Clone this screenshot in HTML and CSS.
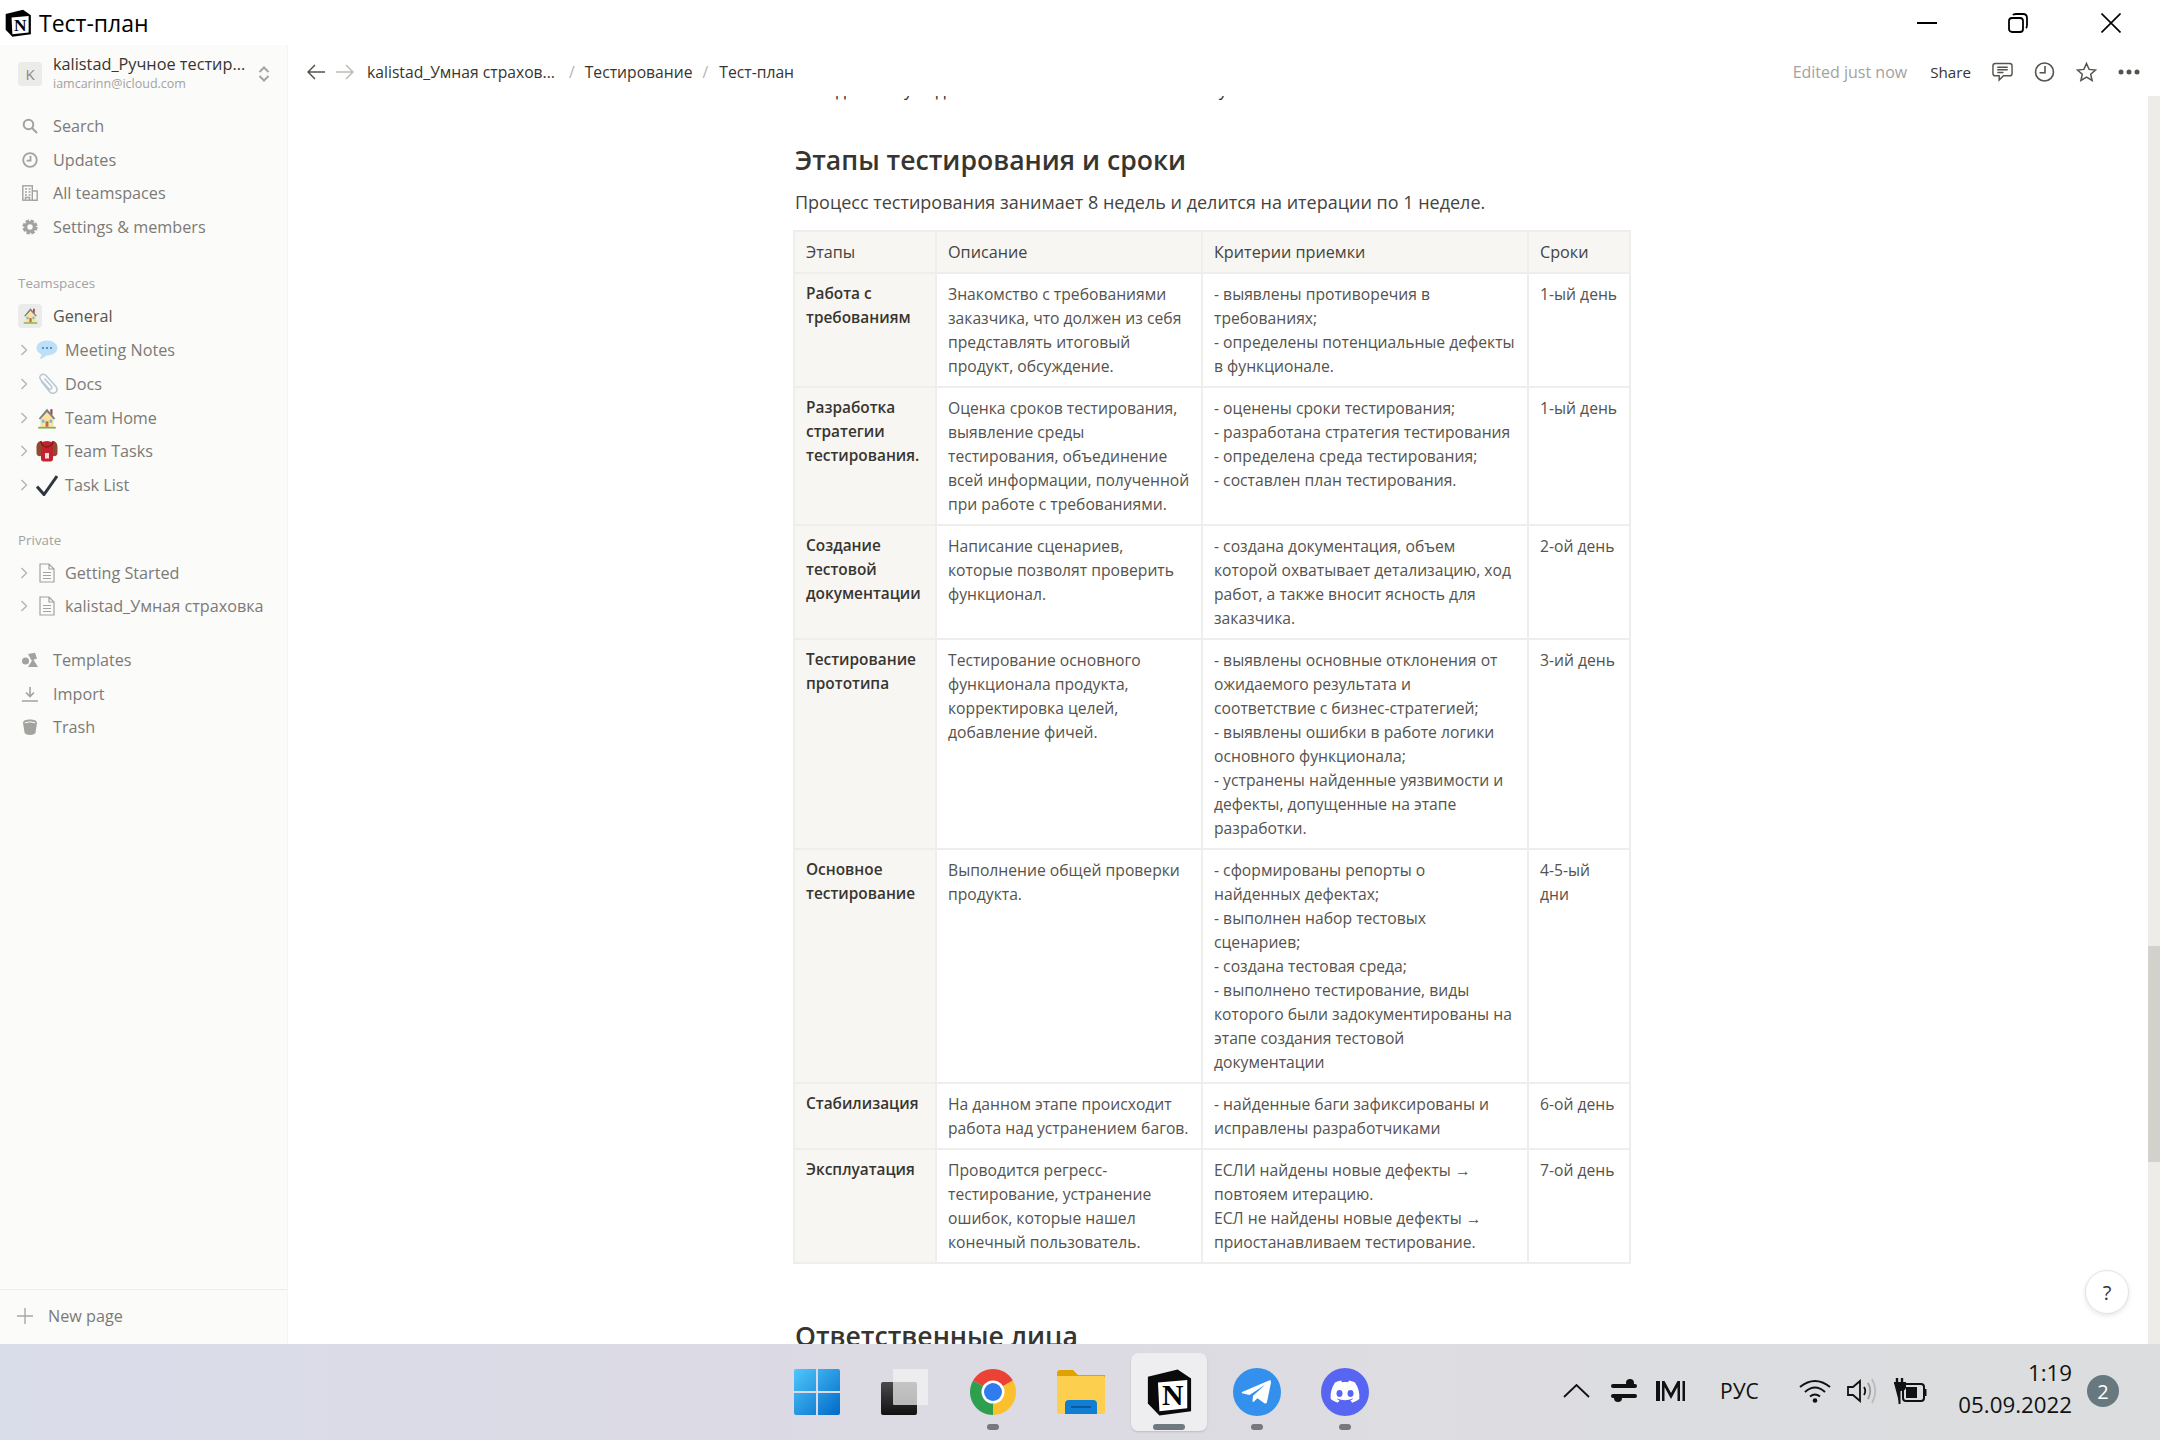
FILE: index.html
```html
<!DOCTYPE html>
<html lang="ru">
<head>
<meta charset="utf-8">
<title>Тест-план</title>
<link rel="stylesheet" href="styles.css">
</head>
<body>
<header class="titlebar">
  <svg class="title-logo" viewBox="0 0 100 100"><path d="M6 18 L68 3 L96 22 L96 90 L30 99 L6 74 Z" fill="#000"/><path d="M27 30 L88 25 L88 84 L30 90 Z" fill="#fff"/><text x="58" y="78" text-anchor="middle" font-family="Liberation Serif" font-weight="700" font-size="62" fill="#000">N</text></svg>
  <span class="title-text">Тест-план</span>
  <div class="win-controls">
    <svg class="win-min" viewBox="0 0 20 20"><path d="M0 10H20" stroke="#000" stroke-width="2"/></svg>
    <svg class="win-restore" viewBox="0 0 20 20" fill="none" stroke="#000" stroke-width="1.8"><rect x="1" y="5" width="14" height="14" rx="3"/><path d="M5 2.2 Q5.5 1 8 1H15Q19 1 19 5V12Q19 14.5 17.8 15"/></svg>
    <svg class="win-close" viewBox="0 0 20 20"><path d="M0.5 .5L19.5 19.5M19.5 .5L.5 19.5" stroke="#000" stroke-width="1.6"/></svg>
  </div>
</header>

<div class="app">
  <aside class="sidebar">
    <div class="account">
      <span class="tile tile-k">K</span>
      <div class="account-text">
        <div class="account-name">kalistad_Ручное тестир...</div>
        <div class="account-mail">iamcarinn@icloud.com</div>
      </div>
      <svg class="updown" viewBox="0 0 12 16" fill="none" stroke="#a5a4a0" stroke-width="2"><path d="M1.5 6L6 1.5L10.5 6M1.5 10L6 14.5L10.5 10"/></svg>
    </div>

    <nav class="group">
      <div class="row"><svg class="nav-ic" viewBox="0 0 16 16" fill="none" stroke="#a3a29e" stroke-width="2"><circle cx="6.5" cy="6.5" r="4.8"/><path d="M10 10L15 15"/></svg><span>Search</span></div>
      <div class="row"><svg class="nav-ic" viewBox="0 0 16 16" fill="none" stroke="#a3a29e" stroke-width="1.8"><circle cx="8" cy="8" r="6.8"/><path d="M8.5 3.8V8.6H4.6"/></svg><span>Updates</span></div>
      <div class="row"><svg class="nav-ic" viewBox="0 0 16 16" fill="none" stroke="#a3a29e" stroke-width="1.4"><rect x=".8" y=".8" width="9.5" height="14.4"/><path d="M10.3 6H15.2V15.2H10.3M3 4H5M6.5 4H8.5M3 7H5M6.5 7H8.5M3 10H5M6.5 10H8.5M3.5 15V12.5H7.5V15"/></svg><span>All teamspaces</span></div>
      <div class="row"><svg class="nav-ic" viewBox="0 0 16 16" fill="none" stroke="#a3a29e"><circle cx="8" cy="8" r="4.3" stroke-width="3.2"/><circle cx="8" cy="8" r="6.4" stroke-width="2.4" stroke-dasharray="3.4 1.6"/></svg><span>Settings &amp; members</span></div>
    </nav>

    <div class="label label-team">Teamspaces</div>
    <div class="row row-general">
      <span class="tile">
        <svg class="tile-emoji" viewBox="0 0 20 20"><use href="#house"/></svg>
      </span>
      <span>General</span>
    </div>
    <div class="row row-tree"><svg class="chev" viewBox="0 0 8 12" fill="none" stroke="#b5b4b0" stroke-width="1.4"><path d="M1.5 1L6.500 6L1.500 11"/></svg><svg class="emoji" viewBox="0 0 22 22"><path d="M11 1.500C5 1.500 .5 4.800 .5 9C.5 11.800 2.500 14 5.500 15.300C5.300 17 4.500 18.800 3.500 20C6.300 19.700 8.700 18 10.300 16.400H11C17 16.400 21.500 13.200 21.500 9C21.500 4.800 17 1.500 11 1.500Z" fill="#bde0f8"/><circle cx="7" cy="9" r="1.100" fill="#3f7fc0"/><circle cx="11" cy="9" r="1.100" fill="#3f7fc0"/><circle cx="15" cy="9" r="1.100" fill="#3f7fc0"/></svg><span>Meeting Notes</span></div>
    <div class="row row-tree"><svg class="chev" viewBox="0 0 8 12" fill="none" stroke="#b5b4b0" stroke-width="1.4"><path d="M1.500 1L6.500 6L1.500 11"/></svg><svg class="emoji" viewBox="0 0 22 22" fill="none" stroke="#b9c6d4" stroke-width="1.500"><path d="M5 8L13.500 18.500C15 20.500 18 20.800 19.700 19.200C21.400 17.600 21.200 15 19.700 13.200L10 2.500C8.700 1 6.300 .8 5 2C3.600 3.300 3.700 5.300 4.800 6.700L12.500 15.500C13.300 16.400 14.500 16.500 15.300 15.800C16 15.100 16 14 15.200 13L8.500 5.500"/></svg><span>Docs</span></div>
    <div class="row row-tree"><svg class="chev" viewBox="0 0 8 12" fill="none" stroke="#b5b4b0" stroke-width="1.4"><path d="M1.500 1L6.500 6L1.500 11"/></svg><svg class="emoji" viewBox="0 0 20 20"><defs><g id="house"><rect x="13" y="2" width="2" height="5" fill="#a0483c"/><path d="M4 9.500L10 3.500L16 9.500V18H4Z" fill="#fde39a"/><path d="M2.500 10.500L10 1.500L17.500 10.500L16.200 11.300L10 4.500L3.800 11.300Z" fill="#7b7f86"/><rect x="8.700" y="13" width="2.600" height="5" fill="#c0694a"/><rect x="5.300" y="11.500" width="2.400" height="2.800" fill="#6fb8e8"/><rect x="12.300" y="11.500" width="2.400" height="2.800" fill="#6fb8e8"/><rect x="2" y="18" width="16" height="1.600" fill="#7fb04a"/></g></defs><use href="#house"/></svg><span>Team Home</span></div>
    <div class="row row-tree"><svg class="chev" viewBox="0 0 8 12" fill="none" stroke="#b5b4b0" stroke-width="1.4"><path d="M1.500 1L6.500 6L1.500 11"/></svg><svg class="emoji" viewBox="0 0 22 22"><path d="M6 1C2 1 .5 3.500 .5 7.500V13C.5 15.500 2 16.500 6 16ZM16 1C20 1 21.500 3.500 21.500 7.500V13C21.500 15.500 20 16.500 16 16Z" fill="#8f4a30"/><path d="M5 2.500Q8 1 11 1T17 2.500V18.500Q17 21.500 14.500 21.500H7.500Q5 21.500 5 18.500Z" fill="#c2222f"/><path d="M4.500 1.500Q7 7 11 7T17.500 1.500" fill="none" stroke="#7e2018" stroke-width="1.500"/><rect x="9" y="13" width="4" height="5.500" fill="#f2dcd8"/></svg><span>Team Tasks</span></div>
    <div class="row row-tree"><svg class="chev" viewBox="0 0 8 12" fill="none" stroke="#b5b4b0" stroke-width="1.4"><path d="M1.500 1L6.500 6L1.500 11"/></svg><svg class="emoji" viewBox="0 0 22 22"><path d="M1 12.500L8 20.500L21 2" fill="none" stroke="#2f3640" stroke-width="3"/></svg><span>Task List</span></div>

    <div class="label label-private">Private</div>
    <div class="row row-tree row-first"><svg class="chev" viewBox="0 0 8 12" fill="none" stroke="#b5b4b0" stroke-width="1.4"><path d="M1.500 1L6.500 6L1.500 11"/></svg><svg class="doc" viewBox="0 0 16 20" fill="none" stroke="#a3a29e" stroke-width="1.200"><path d="M1 1H10L15 6V19H1ZM10 1V6H15M4 9.500H12M4 12.500H12M4 15.500H12"/></svg><span>Getting Started</span></div>
    <div class="row row-tree"><svg class="chev" viewBox="0 0 8 12" fill="none" stroke="#b5b4b0" stroke-width="1.4"><path d="M1.500 1L6.500 6L1.500 11"/></svg><svg class="doc" viewBox="0 0 16 20" fill="none" stroke="#a3a29e" stroke-width="1.200"><path d="M1 1H10L15 6V19H1ZM10 1V6H15M4 9.500H12M4 12.500H12M4 15.500H12"/></svg><span>kalistad_Умная страховка</span></div>

    <nav class="group group-tools">
      <div class="row"><svg class="nav-ic" viewBox="0 0 16 16" fill="#a3a29e"><circle cx="3.500" cy="9" r="3.500"/><path d="M6 2L13 .8L15 6.500L9.500 8.500Z"/><path d="M11 7L16 15H6Z"/></svg><span>Templates</span></div>
      <div class="row"><svg class="nav-ic" viewBox="0 0 16 16" fill="none" stroke="#a3a29e" stroke-width="1.600"><path d="M8 1V10M4 6.500L8 10.500L12 6.500M0 15H16"/></svg><span>Import</span></div>
      <div class="row"><svg class="nav-ic" viewBox="0 0 16 16" fill="#a3a29e"><path d="M1 4C1 1.500 4 .5 8 .5S15 1.500 15 4L13.500 13.500C13.300 15 11 16 8 16S2.700 15 2.500 13.500Z"/><path d="M2.800 3.800Q8 1.800 13.200 3.800" stroke="#fbfbfa" fill="none"/></svg><span>Trash</span></div>
    </nav>

    <div class="new-page">
      <svg class="plus" viewBox="0 0 16 16"><path d="M8 0V16M0 8H16" stroke="#a8a7a3" stroke-width="1.400"/></svg>
      <span>New page</span>
    </div>
  </aside>

  <main class="main">
    <div class="topbar">
      <svg class="arrow" viewBox="0 0 18 16" fill="none" stroke="#55534e" stroke-width="1.500"><path d="M18 8H1M8 1L1 8L8 15"/></svg>
      <svg class="arrow arrow-next" viewBox="0 0 18 16" fill="none" stroke="#bdbcb8" stroke-width="1.500"><path d="M0 8H17M10 1L17 8L10 15"/></svg>
      <span class="crumb crumb-first">kalistad_Умная страхов...</span>
      <span class="slash slash-first">/</span>
      <span class="crumb">Тестирование</span>
      <span class="slash">/</span>
      <span class="crumb">Тест-план</span>
      <span class="edited">Edited just now</span>
      <span class="share">Share</span>
      <svg class="top-ic ic-comment" viewBox="0 0 22 20" fill="none" stroke="#55534e" stroke-width="1.500"><path d="M3.500 1H18.500Q21 1 21 3.500V11.500Q21 14 18.500 14H12L7.500 18.500V14H3.500Q1 14 1 11.500V3.500Q1 1 3.500 1ZM5.500 5H16.500M5.500 7.700H16.500M5.500 10.500H12"/></svg>
      <svg class="top-ic ic-clock" viewBox="0 0 20 20" fill="none" stroke="#55534e" stroke-width="1.600"><circle cx="10" cy="10" r="9"/><path d="M10.500 4V10.800H5"/></svg>
      <svg class="top-ic ic-star" viewBox="0 0 20 20" fill="none" stroke="#55534e" stroke-width="1.500"><path d="M10 1.500L12.600 7.400L19 8L14.200 12.200L15.600 18.500L10 15.200L4.400 18.500L5.800 12.200L1 8L7.400 7.400Z"/></svg>
      <svg class="dots" viewBox="0 0 22 6" fill="#55534e"><circle cx="3" cy="3" r="2.500"/><circle cx="11" cy="3" r="2.500"/><circle cx="19" cy="3" r="2.500"/></svg>
    </div>

    <div class="body-row">
      <div class="page">
        <div class="cut-line"><span class="c1">д</span><span class="c2">у</span><span class="c3">д</span><span class="c4">у</span></div>
        <h2 class="h-stage">Этапы тестирования и сроки</h2>
        <p class="lead">Процесс тестирования занимает 8 недель и делится на итерации по 1 неделе.</p>
        <table class="plan">
          <colgroup><col class="w1"><col class="w2"><col class="w3"><col class="w4"></colgroup>
          <thead>
            <tr><th>Этапы</th><th>Описание</th><th>Критерии приемки</th><th>Сроки</th></tr>
          </thead>
          <tbody>
            <tr><th>Работа с<br>требованиям</th><td>Знакомство с требованиями<br>заказчика, что должен из себя<br>представлять итоговый<br>продукт, обсуждение.</td><td>- выявлены противоречия в<br>требованиях;<br>- определены потенциальные дефекты<br>в функционале.</td><td>1-ый день</td></tr>
            <tr><th>Разработка<br>стратегии<br>тестирования.</th><td>Оценка сроков тестирования,<br>выявление среды<br>тестирования, объединение<br>всей информации, полученной<br>при работе с требованиями.</td><td>- оценены сроки тестирования;<br>- разработана стратегия тестирования<br>- определена среда тестирования;<br>- составлен план тестирования.</td><td>1-ый день</td></tr>
            <tr><th>Создание<br>тестовой<br>документации</th><td>Написание сценариев,<br>которые позволят проверить<br>функционал.</td><td>- создана документация, объем<br>которой охватывает детализацию, ход<br>работ, а также вносит ясность для<br>заказчика.</td><td>2-ой день</td></tr>
            <tr><th>Тестирование<br>прототипа</th><td>Тестирование основного<br>функционала продукта,<br>корректировка целей,<br>добавление фичей.</td><td>- выявлены основные отклонения от<br>ожидаемого результата и<br>соответствие с бизнес-стратегией;<br>- выявлены ошибки в работе логики<br>основного функционала;<br>- устранены найденные уязвимости и<br>дефекты, допущенные на этапе<br>разработки.</td><td>3-ий день</td></tr>
            <tr><th>Основное<br>тестирование</th><td>Выполнение общей проверки<br>продукта.</td><td>- сформированы репорты о<br>найденных дефектах;<br>- выполнен набор тестовых<br>сценариев;<br>- создана тестовая среда;<br>- выполнено тестирование, виды<br>которого были задокументированы на<br>этапе создания тестовой<br>документации</td><td>4-5-ый<br>дни</td></tr>
            <tr><th>Стабилизация</th><td>На данном этапе происходит<br>работа над устранением багов.</td><td>- найденные баги зафиксированы и<br>исправлены разработчиками</td><td>6-ой день</td></tr>
            <tr><th>Эксплуатация</th><td>Проводится регресс-<br>тестирование, устранение<br>ошибок, которые нашел<br>конечный пользователь.</td><td>ЕСЛИ найдены новые дефекты →<br>повтояем итерацию.<br>ЕСЛ не найдены новые дефекты →<br>приостанавливаем тестирование.</td><td>7-ой день</td></tr>
          </tbody>
        </table>
        <h2 class="h-next">Ответственные лица</h2>
      </div>
      <div class="scrollbar"><div class="thumb"></div></div>
      <div class="help">?</div>
    </div>
  </main>
</div>

<footer class="taskbar">
  <div class="task"><svg class="t-win" viewBox="0 0 46 46"><defs><linearGradient id="wg" x1="0" y1="0" x2="1" y2="1"><stop offset="0" stop-color="#4fc8fb"/><stop offset="1" stop-color="#0069c8"/></linearGradient></defs><path d="M2 0H22V22H0V2Q0 0 2 0ZM24 0H44Q46 0 46 2V22H24ZM0 24H22V46H2Q0 46 0 44ZM24 24H46V44Q46 46 44 46H24Z" fill="url(#wg)"/></svg></div>
  <div class="task"><svg class="t-view" viewBox="0 0 48 46"><defs><linearGradient id="vg" x1="0" y1="0" x2="0" y2="1"><stop offset="0" stop-color="#4a4a4a"/><stop offset="1" stop-color="#111"/></linearGradient></defs><rect x="0" y="13" width="36" height="33" rx="2" fill="url(#vg)"/><rect x="12" y="0" width="35" height="36" rx="1" fill="#f4f4f4" fill-opacity=".72"/></svg></div>
  <div class="task task-open"><svg class="t-ic" viewBox="0 0 48 48"><path d="M24 24L4.100 12.500A23 23 0 0 1 43.900 12.500Z" fill="#ea4335"/><path d="M24 24L43.900 12.500A23 23 0 0 1 24 47Z" fill="#fbc02d"/><path d="M24 24L24 47A23 23 0 0 1 4.100 12.500Z" fill="#2e9e4f"/><circle cx="24" cy="24" r="11.500" fill="#fff"/><circle cx="24" cy="24" r="9" fill="#2f7cee"/></svg><i class="run"></i></div>
  <div class="task"><svg class="t-ic" viewBox="0 0 48 44"><path d="M0 3Q0 0 3 0H16L21 5H48V20H0Z" fill="#dfa200"/><path d="M0 6H46Q48 6 48 8V42Q48 44 46 44H2Q0 44 0 42Z" fill="#fdcf4e"/><path d="M8 34Q8 30 12 30H36Q40 30 40 34V44H8Z" fill="#0f7ed4"/><path d="M14 37H34" stroke="#0a5a9c" stroke-width="2"/></svg></div>
  <div class="task task-active"><svg class="t-ic" viewBox="0 0 100 100"><path d="M6 18 L68 3 L96 22 L96 90 L30 99 L6 74 Z" fill="#0a0a0a"/><path d="M27 30 L88 25 L88 84 L30 90 Z" fill="#fff"/><text x="58" y="78" text-anchor="middle" font-family="Liberation Serif" font-weight="700" font-size="62" fill="#000">N</text></svg><i class="run run-wide"></i></div>
  <div class="task task-open"><svg class="t-ic" viewBox="0 0 48 48"><circle cx="24" cy="24" r="24" fill="#3390ec"/><path d="M9 24L36 12.500Q38.500 11.800 38 14.500L34 34Q33.300 36.500 31 35L24.500 30.300L21 33.600Q19.500 34.500 19.500 33L20 27.700L32.500 16.500L16.500 27L10 25.500Q8 25 9 24Z" fill="#fff"/></svg><i class="run"></i></div>
  <div class="task task-open"><svg class="t-ic" viewBox="0 0 48 48"><circle cx="24" cy="24" r="24" fill="#5865f2"/><path d="M34 14.500C32 13.600 30 13 27.900 12.600L27.100 14.200C25 13.900 23 13.900 20.900 14.200L20.100 12.600C18 13 16 13.600 14 14.500C10.200 20.200 9.200 25.700 9.700 31.100C12.100 32.900 14.500 34 16.900 34.700L18.500 32.200C17.600 31.900 16.800 31.500 16 31L16.600 30.500C21.300 32.700 26.700 32.700 31.400 30.500L32 31C31.200 31.500 30.400 31.900 29.500 32.200L31.100 34.700C33.500 34 35.900 32.900 38.300 31.100C38.900 24.900 37.300 19.400 34 14.500Z" fill="#fff"/><ellipse cx="18.500" cy="25.500" rx="3" ry="3.400" fill="#5865f2"/><ellipse cx="29.500" cy="25.500" rx="3" ry="3.400" fill="#5865f2"/></svg><i class="run"></i></div>

  <div class="tray">
    <svg class="tr-chev" viewBox="0 0 27 14" fill="none" stroke="#111" stroke-width="1.800"><path d="M1 13L13.500 1L26 13"/></svg>
    <svg class="tr-sliders" viewBox="0 0 26 24" fill="#111"><rect x="0" y="5" width="26" height="4" rx="2"/><circle cx="19" cy="4" r="4"/><rect x="0" y="15" width="26" height="4" rx="2"/><circle cx="7" cy="19" r="4"/></svg>
    <svg class="tr-m" viewBox="0 0 29 20" fill="#111"><path d="M0 0H4V20H0ZM26.500 0H29V20H26.500ZM6 0H8.500L15 12L21.500 0H24V20H21.500V6L15 18L8.500 6V20H6Z"/></svg>
    <span class="tr-lang">РУС</span>
    <svg class="tr-wifi" viewBox="0 0 32 24" fill="none" stroke="#111" stroke-width="2"><path d="M1 8Q16 -4 31 8M6 13Q16 4 26 13M11 17.500Q16 13.500 21 17.500"/><circle cx="16" cy="21.500" r="2.300" fill="#111" stroke="none"/></svg>
    <svg class="tr-sound" viewBox="0 0 32 26" fill="none" stroke-width="1.800"><path d="M1 9H6L13 3V23L6 17H1Z" stroke="#111"/><path d="M17 9Q19.500 13 17 17" stroke="#111"/><path d="M21 5Q25.500 13 21 21" stroke="#999"/><path d="M25 1Q31.500 13 25 25" stroke="#bbb"/></svg>
    <svg class="tr-batt" viewBox="0 0 33 26" fill="none" stroke="#111"><path d="M3 0V5M8 0V5" stroke-width="2.400"/><path d="M0 5H11V9Q11 12 6.500 12H5.500V26" stroke-width="2" fill="#111"/><rect x="9" y="6" width="21" height="17" rx="3" stroke-width="2"/><rect x="12" y="9" width="11" height="11" fill="#111" stroke="none"/><path d="M31 11V18" stroke-width="3"/></svg>
    <div class="clock"><div>1:19</div><div>05.09.2022</div></div>
    <span class="badge">2</span>
  </div>
</footer>
</body>
</html>
```

FILE: styles.css
```css
* { box-sizing: border-box; }
html, body { margin: 0; padding: 0; }
body {
  width: 2160px;
  height: 1440px;
  overflow: hidden;
  display: flex;
  flex-direction: column;
  font-family: "Open Sans", "Noto Sans", sans-serif;
  color: #37352f;
  background: #fff;
}

/* window title bar */
.titlebar { height: 45px; flex: none; display: flex; align-items: center; background: #fff; }
.title-logo { width: 28px; height: 28px; margin-left: 4px; }
.title-text { margin-left: 7px; font-size: 23px; color: #000; }
.win-controls { margin-left: auto; display: flex; align-items: center; padding-right: 39px; }
.win-controls svg { width: 20px; height: 20px; display: block; }
.win-restore { margin-left: 71px; }
.win-close { margin-left: 73px; }

/* app */
.app { flex: 1; min-height: 0; display: flex; }

.sidebar {
  width: 288px;
  flex: none;
  display: flex;
  flex-direction: column;
  background: #fbfbfa;
  border-right: 1px solid #f5f5f3;
  font-size: 16.2px;
  color: #7b7a76;
}
.account { height: 64px; flex: none; display: flex; align-items: center; padding: 0 0 7px 18px; }
.tile {
  width: 24px; height: 24px; flex: none;
  display: flex; align-items: center; justify-content: center;
  background: #ebebe9; border-radius: 4px;
  font-size: 15px; color: #8a8985;
}
.account-text { margin-left: 11px; width: 196px; }
.account-name { font-size: 16.3px; line-height: 20px; color: #37352f; white-space: nowrap; }
.account-mail { font-size: 12.5px; line-height: 19px; color: #a3a29e; }
.updown { width: 12px; height: 16px; margin-left: 9px; flex: none; }

.row { height: 33.7px; display: flex; align-items: center; padding-left: 22px; white-space: nowrap; }
.nav-ic { width: 16px; height: 16px; flex: none; margin-right: 15px; }
.label { height: 22px; line-height: 22px; padding-left: 18px; font-size: 13.4px; color: #a3a29e; }
.label-team { margin-top: 28px; margin-bottom: 5px; }
.label-private { margin-top: 27px; }
.row-first { margin-top: 5px; }
.row-general { padding-left: 18px; margin-bottom: 1px; color: #55534e; }
.row-general .tile { margin-right: 11px; }
.tile-emoji { width: 17px; height: 17px; }
.row-tree { padding-left: 20px; }
.chev { width: 8px; height: 12px; flex: none; margin-right: 8px; }
.emoji { width: 22px; height: 22px; flex: none; margin-right: 7px; }
.doc { width: 16px; height: 20px; flex: none; margin: 0 10px 0 3px; }
.group-tools { margin-top: 20px; }
.new-page {
  margin-top: auto;
  height: 55px; flex: none;
  display: flex; align-items: center;
  padding: 0 0 3px 17px;
  border-top: 1px solid #ededeb;
}
.plus { width: 16px; height: 16px; margin-right: 15px; }

.main { flex: 1; min-width: 0; display: flex; flex-direction: column; background: #fff; }
.topbar { height: 51px; flex: none; display: flex; align-items: center; padding: 2px 0 0 19px; font-size: 15.7px; position: relative; z-index: 1; background: #fff; }
.arrow { width: 18px; height: 16px; flex: none; }
.arrow-next { margin-left: 11px; }
.crumb { color: #37352f; white-space: nowrap; }
.crumb-first { margin-left: 13px; }
.slash { margin: 0 11px 0 10px; color: #b5b4b0; }
.slash-first { margin-left: 14px; margin-right: 10px; }
.edited { margin-left: auto; font-size: 16px; color: #a3a29e; }
.share { margin-left: 23px; font-size: 15.2px; color: #37352f; }
.top-ic { flex: none; height: 20px; width: 21px; }
.ic-comment { margin-left: 21px; }
.ic-clock { margin-left: 21px; }
.ic-star { margin-left: 21px; }
.dots { width: 22px; height: 6px; margin: 0 20px 0 21px; flex: none; }

.body-row { flex: 1; min-height: 0; display: flex; position: relative; }
.page { flex: 1; min-width: 0; overflow: hidden; padding-left: 505px; }
.cut-line { height: 28px; margin-top: -21px; margin-left: 2px; line-height: 28px; font-size: 17.4px; display: flex; }
.c1 { margin-left: 41px; }
.c2 { margin-left: 58px; }
.c3 { margin-left: 23px; }
.c4 { margin-left: 273px; }
h2 { margin: 0; font-size: 26.6px; line-height: 36px; font-weight: 600; margin-left: 2px; }
.h-stage { margin-top: 39px; }
.h-next { margin-top: 54px; }
.lead { margin: 10px 0 14px 2px; font-size: 18px; line-height: 28px; color: #45433e; }

.plan { width: 836px; border-collapse: collapse; table-layout: fixed; font-size: 15.7px; line-height: 24px; }
.w1 { width: 142px; }
.w2 { width: 266px; }
.w3 { width: 326px; }
.w4 { width: 102px; }
.plan th, .plan td { padding: 8px 11px; border: 2px solid #eeeeec; text-align: left; vertical-align: top; white-space: nowrap; }
.plan th { font-weight: 600; font-size: 15.4px; background: #f7f6f3; }
.plan thead th { font-weight: 400; font-size: 16.2px; color: #45433e; }
.plan td { color: #55534e; }

.scrollbar { width: 12px; flex: none; background: #edece9; position: relative; }
.thumb { position: absolute; left: 0; right: 0; top: 850px; height: 216px; background: #d3d1cb; }
.help {
  position: absolute; right: 31px; bottom: 30px;
  width: 44px; height: 44px; border-radius: 50%;
  display: flex; align-items: center; justify-content: center;
  background: #fff; border: 1px solid #e3e3e1;
  box-shadow: 0 2px 5px rgba(15,15,15,.1);
  font-size: 20px; color: #37352f;
}

/* taskbar */
.taskbar {
  height: 96px; flex: none;
  display: flex; align-items: center;
  padding-left: 773px;
  background: linear-gradient(90deg, #d9dce9 0%, #dcdae3 45%, #dddde1 70%, #dcdddf 100%);
  font-family: "Open Sans", sans-serif;
}
.task { width: 88px; height: 78px; flex: none; display: flex; align-items: center; justify-content: center; position: relative; }
.t-win { width: 46px; height: 46px; }
.t-view { width: 48px; height: 46px; }
.t-ic { width: 48px; height: 48px; }
.task-active::before { content: ""; position: absolute; left: 6px; right: 6px; top: 0; bottom: 0; background: #eeeef1; border-radius: 7px; box-shadow: 0 1px 2px rgba(0,0,0,.15); }
.task-active .t-ic { position: relative; }
.run { position: absolute; left: 38px; bottom: 1px; width: 12px; height: 6px; border-radius: 3px; background: #77777c; }
.run-wide { left: 28px; width: 32px; background: #6f7a80; }

.tray { flex: 1; display: flex; align-items: center; margin-left: 174px; padding: 0 41px 2px 0; color: #111; }
.tr-chev { width: 27px; height: 14px; }
.tr-sliders { width: 26px; height: 24px; margin-left: 21px; }
.tr-m { width: 29px; height: 20px; margin-left: 19px; }
.tr-lang { margin-left: 35px; font-size: 21px; }
.tr-wifi { width: 32px; height: 24px; margin-left: 40px; }
.tr-sound { width: 32px; height: 26px; margin-left: 16px; }
.tr-batt { width: 33px; height: 26px; margin-left: 15px; }
.clock { margin-left: auto; margin-bottom: 4px; text-align: right; font-size: 22.3px; line-height: 32px; }
.badge { width: 32px; height: 32px; margin-left: 15px; border-radius: 50%; background: #67787f; color: #fff; display: flex; align-items: center; justify-content: center; font-size: 20px; }
```
